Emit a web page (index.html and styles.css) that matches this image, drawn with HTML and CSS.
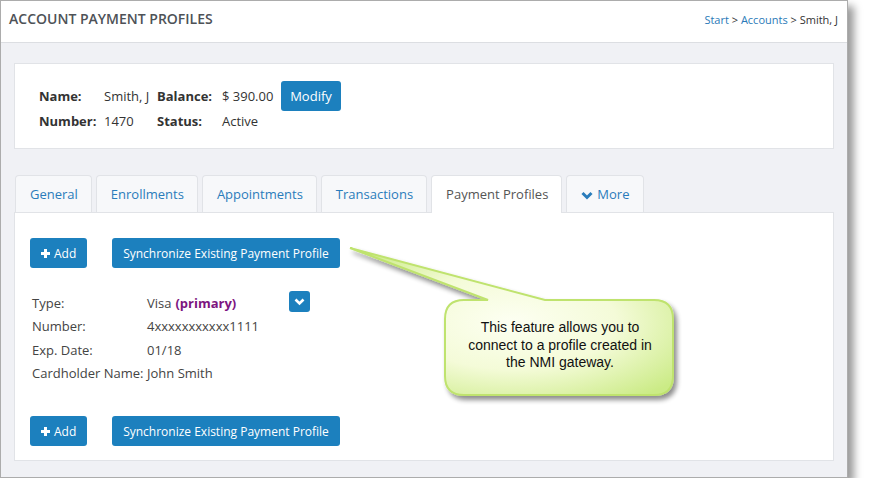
FILE: index.html
```html
<!DOCTYPE html>
<html lang="en">
<head>
    <meta charset="UTF-8">
    <title>Account Payment Profiles</title>
    <link rel="stylesheet" href="styles.css">
</head>
<body>
    <div class="window">
        <div class="topbar">
            <div class="page-title">ACCOUNT PAYMENT PROFILES</div>
            <div class="crumbs">
                <a href="#">Start</a> &gt; <a href="#">Accounts</a> &gt; Smith, J
            </div>
        </div>
        <div class="main">
            <div class="account-card">
                <span class="lbl">Name:</span>
                <span>Smith, J</span>
                <span class="lbl">Balance:</span>
                <span>$ 390.00</span>
                <button class="btn btn-modify">Modify</button>
                <span class="lbl">Number:</span>
                <span>1470</span>
                <span class="lbl">Status:</span>
                <span>Active</span>
            </div>

            <div class="tabs">
                <a href="#" class="tab">General</a>
                <a href="#" class="tab">Enrollments</a>
                <a href="#" class="tab">Appointments</a>
                <a href="#" class="tab">Transactions</a>
                <a href="#" class="tab active">Payment Profiles</a>
                <a href="#" class="tab">
                    <svg class="chev" width="12" height="9" viewBox="0 0 12 9"><polyline points="1.5,2 6,6.5 10.5,2" fill="none" stroke="#2a7cbb" stroke-width="3"/></svg>More
                </a>
            </div>

            <div class="panel">
                <div class="btn-row">
                    <button class="btn btn-add">
                        <svg width="9" height="9" viewBox="0 0 9 9"><rect x="3" y="0" width="3" height="9" fill="#fff"/><rect x="0" y="3" width="9" height="3" fill="#fff"/></svg>Add
                    </button>
                    <button class="btn btn-sync">Synchronize Existing Payment Profile</button>
                </div>

                <div class="profile">
                    <span>Type:</span>
                    <span class="type-val">Visa <b class="primary">(primary)</b>
                        <button class="btn-caret"><svg width="11" height="8" viewBox="0 0 11 8"><polyline points="1.5,1.5 5.5,5.5 9.5,1.5" fill="none" stroke="#fff" stroke-width="2.6"/></svg></button>
                    </span>
                    <span>Number:</span>
                    <span>4xxxxxxxxxxx1111</span>
                    <span>Exp. Date:</span>
                    <span>01/18</span>
                    <span>Cardholder Name:</span>
                    <span>John Smith</span>
                </div>

                <div class="btn-row">
                    <button class="btn btn-add">
                        <svg width="9" height="9" viewBox="0 0 9 9"><rect x="3" y="0" width="3" height="9" fill="#fff"/><rect x="0" y="3" width="9" height="3" fill="#fff"/></svg>Add
                    </button>
                    <button class="btn btn-sync">Synchronize Existing Payment Profile</button>
                </div>
            </div>
        </div>

        <svg class="callout-shape" width="350" height="175" viewBox="0 0 350 175">
            <defs>
                <radialGradient id="bubbleFill" cx="50%" cy="50%" r="65%">
                    <stop offset="0%" stop-color="#fdfff2"/>
                    <stop offset="50%" stop-color="#f4fbd8"/>
                    <stop offset="100%" stop-color="#cbeb86"/>
                </radialGradient>
                <filter id="bubbleShadow" x="-10%" y="-10%" width="130%" height="140%">
                    <feGaussianBlur in="SourceAlpha" stdDeviation="2.5"/>
                    <feOffset dx="3" dy="4" result="blur"/>
                    <feComponentTransfer><feFuncA type="linear" slope="0.45"/></feComponentTransfer>
                    <feMerge><feMergeNode/><feMergeNode in="SourceGraphic"/></feMerge>
                </filter>
            </defs>
            <path d="M124 60 L148 60 L10 8 L205 60 L314 60 Q333 60 333 79 L333 136 Q333 155 314 155 L124 155 Q105 155 105 136 L105 79 Q105 60 124 60 Z"
                  fill="url(#bubbleFill)" stroke="#bfe36e" stroke-width="2" filter="url(#bubbleShadow)"/>
        </svg>
        <div class="callout-text">This feature allows you to<br>connect to a profile created in<br>the NMI gateway.</div>
    </div>
</body>
</html>
```

FILE: styles.css
```css
body {
    margin: 0;
    padding: 0;
    background-color: #fff;
    font-family: 'Open Sans', sans-serif;
    font-size: 13px;
    color: #333;
}
.window {
    position: relative;
    width: 846px;
    border: 1px solid #acacac;
    box-shadow: 6px 6px 8px rgba(0, 0, 0, 0.4);
}
.topbar {
    height: 42px;
    box-sizing: border-box;
    border-bottom: 1px solid #dcdee2;
    background-color: #fff;
    display: flex;
    align-items: center;
    justify-content: space-between;
    padding: 0 9px 6px 8px;
}
.page-title {
    font-size: 14px;
    font-weight: 600;
    color: #4e5257;
}
.crumbs {
    font-size: 11px;
    color: #333;
    margin-top: 1px;
}
.crumbs a {
    color: #2a7ab8;
    text-decoration: none;
}
.main {
    background-color: #f0f1f5;
    padding: 20px 13px 16px 13px;
}
.account-card {
    background: #fff;
    border: 1px solid #e1e3e7;
    height: 86px;
    box-sizing: border-box;
    padding: 17px 24px 0 24px;
    display: grid;
    grid-template-columns: 65px 53px 65px 59px auto;
    grid-template-rows: 30px 20px;
    align-items: center;
    justify-items: start;
}
.lbl {
    font-weight: bold;
    color: #333;
}
.btn {
    background: #1c80be;
    color: #fff;
    border: none;
    border-radius: 3px;
    font-family: 'Open Sans', sans-serif;
    font-size: 12px;
    height: 30px;
    padding: 0 12px;
    cursor: pointer;
    display: inline-flex;
    align-items: center;
}
.btn-modify {
    width: 60px;
    padding: 0;
    justify-content: center;
    font-size: 13px;
    margin-top: -1px;
}
.tabs {
    display: flex;
    gap: 4px;
    margin-top: 26px;
    padding-left: 1px;
}
.tab {
    display: block;
    height: 37px;
    box-sizing: border-box;
    line-height: 37px;
    padding: 0 13px 0 14px;
    background: #f7f8fa;
    border: 1px solid #e1e3e7;
    border-bottom: none;
    border-radius: 4px 4px 0 0;
    color: #2a7cbb;
    text-decoration: none;
    font-size: 13px;
}
.tab.active {
    background: #fff;
    color: #555;
    height: 38px;
    margin-bottom: -1px;
    position: relative;
}
.chev {
    margin-right: 4px;
    vertical-align: -1px;
}
.panel {
    background: #fff;
    border: 1px solid #e1e3e7;
    height: 249px;
    box-sizing: border-box;
    padding: 25px 15px 0 15px;
}
.btn-row {
    display: flex;
    gap: 25px;
}
.btn-add {
    width: 57px;
    padding: 0 0 0 11px;
    gap: 4px;
}
.btn-sync {
    width: 228px;
    justify-content: center;
    padding: 0;
}
.profile {
    display: grid;
    grid-template-columns: 115px auto;
    grid-auto-rows: 23.5px;
    align-items: center;
    margin: 23px 0 31px 2px;
    color: #444;
}
.type-val {
    display: flex;
    align-items: center;
}
.primary {
    color: #7d1580;
    margin-left: 4px;
}
.btn-caret {
    width: 21px;
    height: 21px;
    background: #1c80be;
    border: none;
    border-radius: 3px;
    margin-left: 53px;
    margin-top: -2px;
    padding: 0;
    display: flex;
    align-items: center;
    justify-content: center;
}
.callout-shape {
    position: absolute;
    left: 339px;
    top: 239px;
}
.callout-text {
    position: absolute;
    left: 444px;
    top: 318px;
    width: 230px;
    text-align: center;
    font-family: 'Liberation Sans', Arial, sans-serif;
    font-size: 14px;
    line-height: 17.5px;
    color: #111;
}
```
